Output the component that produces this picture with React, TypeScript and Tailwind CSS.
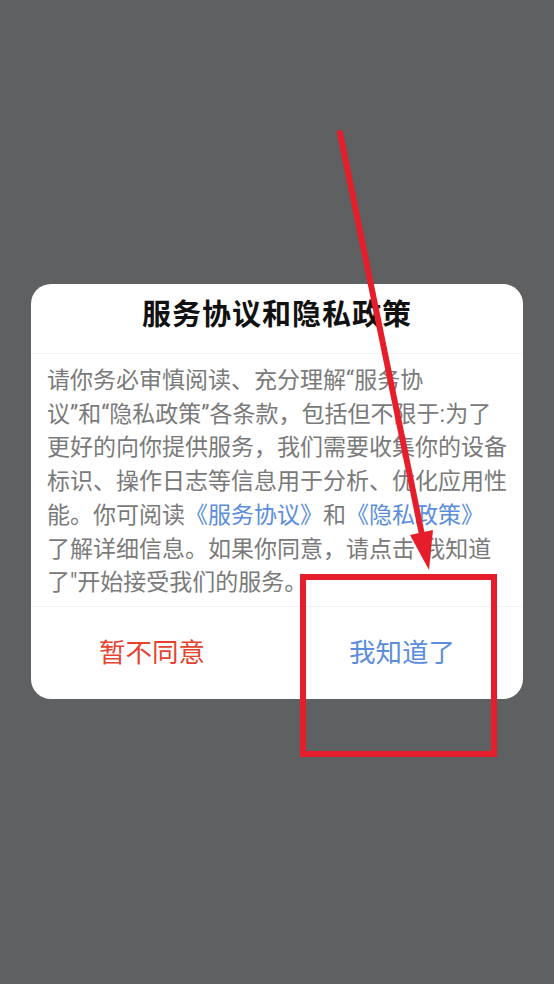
import React from "react";

const CJK = '"Roboto", "Noto Sans CJK SC", sans-serif';

const lines: React.ReactNode[] = [
  "请你务必审慎阅读、充分理解“服务协",
  "议”和“隐私政策”各条款，包括但不限于:为了",
  "更好的向你提供服务，我们需要收集你的设备",
  "标识、操作日志等信息用于分析、优化应用性",
  <>
    能。你可阅读<span className="text-[#5b8ddc]">《服务协议》</span>和
    <span className="text-[#5b8ddc]">《隐私政策》</span>
  </>,
  "了解详细信息。如果你同意，请点击\"我知道",
  "了\"开始接受我们的服务。",
];

export default function App() {
  return (
    <div
      className="relative min-h-screen w-full bg-[#5f6062] pt-[284px]"
      style={{ fontFamily: CJK }}
    >
      {/* Dialog */}
      <div className="mx-[31px] overflow-hidden rounded-[20px] bg-white">
        <div className="flex h-[69px] items-center justify-center pb-[6px]">
          <h2 className="text-[29px] font-bold tracking-[1px] text-[#111111]">
            服务协议和隐私政策
          </h2>
        </div>
        <div className="h-px bg-[#f3f3f3]" />
        <div className="px-[16px] pb-[6px] pt-[10px] text-[23px] leading-[33.7px] text-[#7a7a7a]">
          {lines.map((l, i) => (
            <div key={i} className="whitespace-nowrap">
              {l}
            </div>
          ))}
        </div>
        <div className="h-px bg-[#f3f3f3]" />
        <div className="flex h-[92px]">
          <button className="flex flex-1 items-center justify-center pr-2 text-[26.5px] text-[#e5432f]">
            暂不同意
          </button>
          <button className="flex flex-1 items-center justify-center text-[26.5px] text-[#5b8ddc]">
            我知道了
          </button>
        </div>
      </div>

      {/* Red annotation overlay */}
      <svg
        className="pointer-events-none absolute left-0 top-0"
        width="554"
        height="984"
        viewBox="0 0 554 984"
      >
        <line
          x1="340"
          y1="133"
          x2="422"
          y2="535"
          stroke="#e61e2b"
          strokeWidth="6"
          strokeLinecap="round"
        />
        <polygon points="429,570 433,530 410,535" fill="#e61e2b" />
        <rect
          x="303"
          y="577"
          width="191"
          height="177"
          fill="none"
          stroke="#e61e2b"
          strokeWidth="6"
        />
      </svg>
    </div>
  );
}
